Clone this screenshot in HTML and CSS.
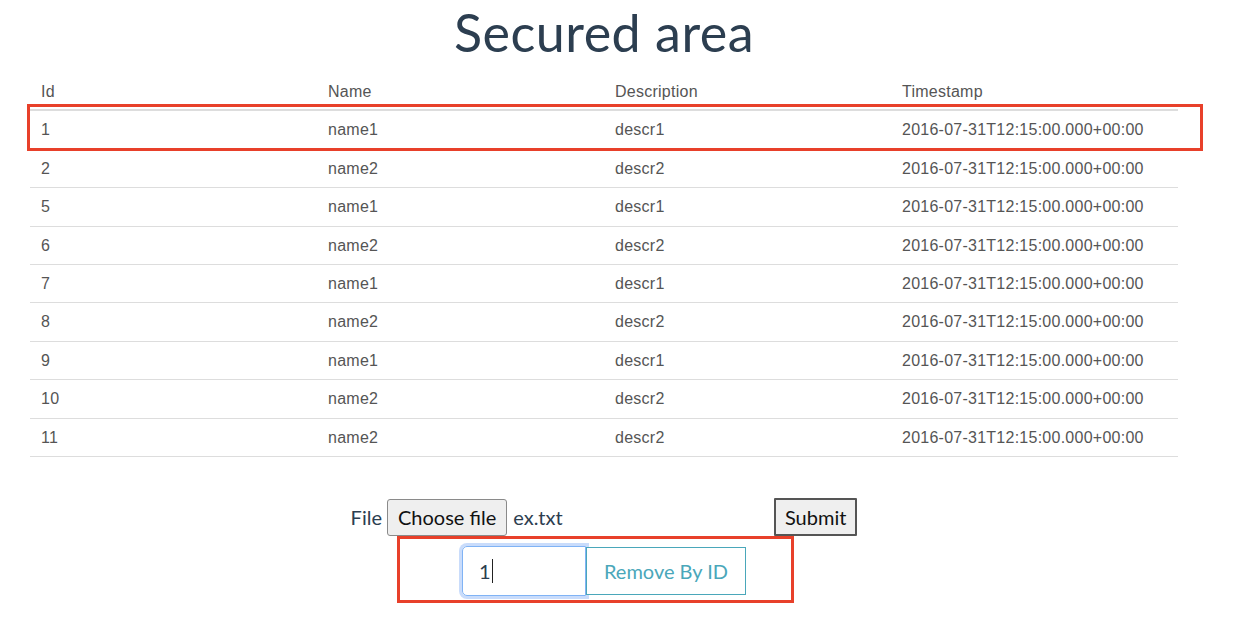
FILE: index.html
```html
<!DOCTYPE html>
<html>
<head>
<meta charset="utf-8">
<link rel="stylesheet" href="styles.css">
</head>
<body>
<div class="app">
  <h1 class="title">Secured area</h1>
  <div class="table-wrap">
    <table class="data">
      <thead>
        <tr><th>Id</th><th>Name</th><th>Description</th><th>Timestamp</th></tr>
      </thead>
      <tbody>
        <tr><td>1</td><td>name1</td><td>descr1</td><td>2016-07-31T12:15:00.000+00:00</td></tr>
        <tr><td>2</td><td>name2</td><td>descr2</td><td>2016-07-31T12:15:00.000+00:00</td></tr>
        <tr><td>5</td><td>name1</td><td>descr1</td><td>2016-07-31T12:15:00.000+00:00</td></tr>
        <tr><td>6</td><td>name2</td><td>descr2</td><td>2016-07-31T12:15:00.000+00:00</td></tr>
        <tr><td>7</td><td>name1</td><td>descr1</td><td>2016-07-31T12:15:00.000+00:00</td></tr>
        <tr><td>8</td><td>name2</td><td>descr2</td><td>2016-07-31T12:15:00.000+00:00</td></tr>
        <tr><td>9</td><td>name1</td><td>descr1</td><td>2016-07-31T12:15:00.000+00:00</td></tr>
        <tr><td>10</td><td>name2</td><td>descr2</td><td>2016-07-31T12:15:00.000+00:00</td></tr>
        <tr><td>11</td><td>name2</td><td>descr2</td><td>2016-07-31T12:15:00.000+00:00</td></tr>
      </tbody>
    </table>
    <div class="mark mark-row"></div>
  </div>
  <div class="upload">
    <span class="label">File</span>
    <div class="file">
      <button class="choose">Choose file</button>
      <span class="fname">ex.txt</span>
    </div>
    <button class="submit">Submit</button>
  </div>
  <div class="remove-wrap">
    <div class="remove">
      <div class="id-input"><span class="val">1</span><span class="caret"></span></div>
      <button class="remove-btn">Remove By ID</button>
    </div>
    <div class="mark mark-remove"></div>
  </div>
</div>
</body>
</html>
```
FILE: styles.css
```css
html, body {
  margin: 0;
  padding: 0;
  background: #fff;
}
.app {
  width: 1208px;
  min-height: 634px;
  font-family: Lato, "Noto Sans", sans-serif;
  color: #2c3e50;
  text-align: center;
}
.title {
  margin: 0;
  padding-top: 2px;
  height: 70px;
  font-size: 52px;
  font-weight: 400;
  line-height: 60px;
  letter-spacing: 0.5px;
}
.table-wrap {
  position: relative;
  margin: 0 30px;
}
.data {
  width: 1148px;
  border-collapse: collapse;
  table-layout: fixed;
  font-family: "Liberation Sans", Arial, sans-serif;
  font-size: 16px;
  letter-spacing: 0.25px;
  line-height: 21.4px;
  color: #555;
  text-align: left;
}
.data th {
  font-weight: 400;
  padding: 9px 11px 7px;
  border-bottom: 2px solid #ddd;
}
.data td {
  padding: 8px 11px;
  border-top: 1px solid #ddd;
}
.data tbody tr:last-child td {
  border-bottom: 1px solid #ddd;
}
.mark {
  position: absolute;
  border: 3px solid #e8402a;
  box-sizing: border-box;
  pointer-events: none;
}
.mark-row {
  left: -3px;
  top: 32px;
  width: 1176px;
  height: 47px;
}
.upload {
  margin-top: 41px;
  display: flex;
  justify-content: center;
  align-items: center;
  font-size: 20px;
}
.label {
  margin-right: 5px;
}
.file {
  width: 387px;
  display: flex;
  align-items: center;
}
.choose {
  font: inherit;
  color: #111;
  height: 37px;
  padding: 0 10px;
  background: #efefef;
  border: 1px solid #8a8a8a;
  border-radius: 3px;
}
.fname {
  margin-left: 6px;
}
.submit {
  font: inherit;
  color: #111;
  height: 38px;
  padding: 0 9px;
  background: #efefef;
  border: 2px solid #555;
  border-radius: 1px;
}
.remove-wrap {
  position: relative;
  display: flex;
  justify-content: center;
  padding-top: 10px;
}
.remove {
  display: flex;
  align-items: center;
}
.id-input {
  box-sizing: border-box;
  width: 124px;
  height: 50px;
  display: flex;
  align-items: center;
  font-size: 20px;
  color: #2c3e50;
  padding: 0 16px;
  border: 1px solid #80b3f5;
  border-radius: 5px 0 0 5px;
  box-shadow: 0 0 0 3px #c9dcfb;
  text-align: left;
}
.caret {
  display: inline-block;
  width: 1px;
  height: 24px;
  margin-left: 1px;
  background: #222;
}
.remove-btn {
  box-sizing: border-box;
  width: 160px;
  height: 48px;
  font: inherit;
  font-size: 20px;
  color: #4aa7ba;
  background: #fff;
  border: 1px solid #4aa7ba;
  border-radius: 0;
}
.mark-remove {
  left: 397px;
  top: 0;
  width: 397px;
  height: 67px;
}
```
